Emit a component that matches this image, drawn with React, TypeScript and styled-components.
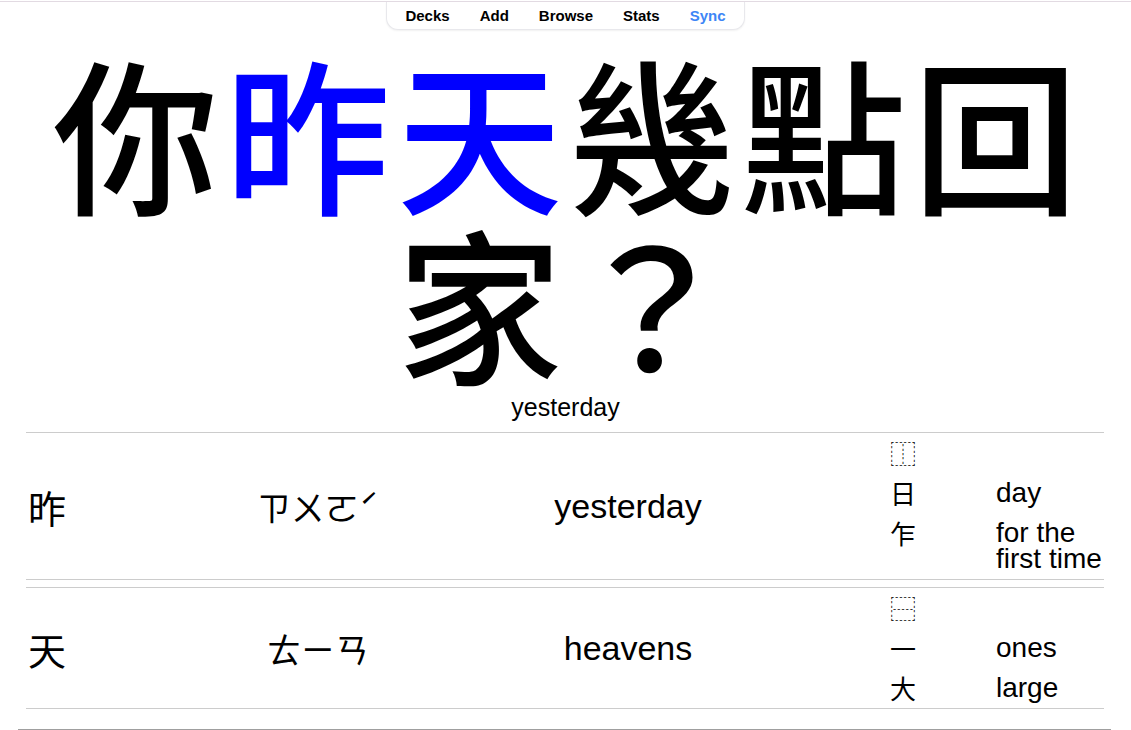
import React from "react";
import styled, { createGlobalStyle } from "styled-components";

const GlobalStyle = createGlobalStyle`
  html, body { margin: 0; padding: 0; background: #ffffff; }
  body { font-family: "Liberation Sans", Arial, sans-serif; color: #000; }
`;

const Page = styled.div`
  display: flex;
  flex-direction: column;
  width: 1131px;
  padding-top: 1px;
`;

const TopRule = styled.div`
  height: 1px;
  background: #e2dae2;
`;

const Nav = styled.nav`
  align-self: center;
  display: flex;
  align-items: center;
  height: 27px;
  padding: 0 3px;
  border: 1px solid #e8e8ec;
  border-top: none;
  border-radius: 0 0 12px 12px;
  box-shadow: 0 1px 2px rgba(0, 0, 0, 0.06);
  background: #fff;
`;

const NavLink = styled.a<{ $active?: boolean }>`
  padding: 0 15px;
  font-size: 15px;
  line-height: 17px;
  font-weight: bold;
  color: ${(p) => (p.$active ? "#3d86f6" : "#000")};
  text-decoration: none;
`;

const Sentence = styled.div`
  margin-top: 15px;
  padding-left: 6px;
  text-align: center;
  font-family: "Noto Sans CJK TC", "Noto Sans CJK SC", sans-serif;
  font-size: 166px;
  letter-spacing: 6px;
  line-height: 170px;
  font-weight: 500;
`;

const Hi = styled.span`
  color: #0000ff;
`;

const Gloss = styled.div`
  margin-top: 8px;
  text-align: center;
  font-size: 25px;
  line-height: 28px;
`;

const Table = styled.div`
  display: flex;
  flex-direction: column;
  gap: 7px;
  margin: 11px 27px 0 26px;
`;

const Entry = styled.div`
  display: grid;
  grid-template-columns: 144px 296px 324px 1fr;
  align-items: center;
  border-top: 1px solid #cccccc;
  border-bottom: 1px solid #cccccc;
`;

const HanCell = styled.div`
  padding-left: 2px;
  font-family: "Noto Sans CJK TC", sans-serif;
  font-size: 38px;
  font-weight: 400;
`;

const ZhuyinCell = styled.div`
  text-align: center;
  font-family: "Noto Sans CJK TC", sans-serif;
  font-size: 34px;
  font-weight: 400;
`;

const MeaningCell = styled.div`
  text-align: center;
  font-size: 34px;
`;

const Components = styled.div`
  display: grid;
  grid-template-columns: 106px 1fr;
  padding-left: 100px;
`;

const CompChar = styled.div`
  padding: 6px 0;
  font-family: "Noto Sans CJK TC", sans-serif;
  font-size: 26px;
  line-height: 28px;
`;

const CompMeaning = styled.div`
  padding: 7px 0;
  font-size: 28px;
  line-height: 26px;
`;

const BottomRule = styled.hr`
  margin: 20px 20px 0 18px;
  border: none;
  border-top: 1px solid #9f9f9f;
`;

type Comp = { ch: string; meaning: string };
type Row = { han: string; zhuyin: string; meaning: string; comps: Comp[] };

const rows: Row[] = [
  {
    han: "昨",
    zhuyin: "ㄗㄨㄛˊ",
    meaning: "yesterday",
    comps: [
      { ch: "⿰", meaning: "" },
      { ch: "日", meaning: "day" },
      { ch: "乍", meaning: "for the first time" },
    ],
  },
  {
    han: "天",
    zhuyin: "ㄊㄧㄢ",
    meaning: "heavens",
    comps: [
      { ch: "⿱", meaning: "" },
      { ch: "一", meaning: "ones" },
      { ch: "大", meaning: "large" },
    ],
  },
];

export default function App() {
  return (
    <Page>
      <GlobalStyle />
      <TopRule />
      <Nav>
        <NavLink>Decks</NavLink>
        <NavLink>Add</NavLink>
        <NavLink>Browse</NavLink>
        <NavLink>Stats</NavLink>
        <NavLink $active>Sync</NavLink>
      </Nav>
      <Sentence>
        你<Hi>昨天</Hi>幾點回家？
      </Sentence>
      <Gloss>yesterday</Gloss>
      <Table>
        {rows.map((r) => (
          <Entry key={r.han}>
            <HanCell>{r.han}</HanCell>
            <ZhuyinCell>{r.zhuyin}</ZhuyinCell>
            <MeaningCell>{r.meaning}</MeaningCell>
            <Components>
              {r.comps.map((c) => (
                <React.Fragment key={c.ch}>
                  <CompChar>{c.ch}</CompChar>
                  <CompMeaning>{c.meaning}</CompMeaning>
                </React.Fragment>
              ))}
            </Components>
          </Entry>
        ))}
      </Table>
      <BottomRule />
    </Page>
  );
}
